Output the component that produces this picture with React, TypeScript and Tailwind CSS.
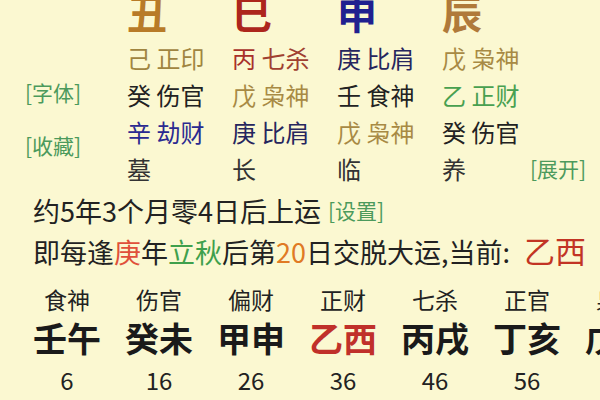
import React from "react";

const font = { fontFamily: '"Noto Sans CJK SC", "Noto Sans", sans-serif' };

type Cell = { gan: string; shen: string; gc: string; sc: string };

const tops = [
  { ch: "丑", c: "text-[#b87b28]" },
  { ch: "巳", c: "text-[#ad261c]" },
  { ch: "申", c: "text-[#20208f]" },
  { ch: "辰", c: "text-[#b07a3a]" },
];

const rows: Cell[][] = [
  [
    { gan: "己", shen: "正印", gc: "text-[#a08540]", sc: "text-[#a08540]" },
    { gan: "丙", shen: "七杀", gc: "text-[#a8302a]", sc: "text-[#a04030]" },
    { gan: "庚", shen: "比肩", gc: "text-[#26265e]", sc: "text-[#26265e]" },
    { gan: "戊", shen: "枭神", gc: "text-[#a88a44]", sc: "text-[#a88a44]" },
  ],
  [
    { gan: "癸", shen: "伤官", gc: "text-[#222]", sc: "text-[#222]" },
    { gan: "戊", shen: "枭神", gc: "text-[#a88a44]", sc: "text-[#a88a44]" },
    { gan: "壬", shen: "食神", gc: "text-[#222]", sc: "text-[#222]" },
    { gan: "乙", shen: "正财", gc: "text-[#48a050]", sc: "text-[#48a050]" },
  ],
  [
    { gan: "辛", shen: "劫财", gc: "text-[#2a2a90]", sc: "text-[#2a2a90]" },
    { gan: "庚", shen: "比肩", gc: "text-[#26265e]", sc: "text-[#26265e]" },
    { gan: "戊", shen: "枭神", gc: "text-[#a88a44]", sc: "text-[#a88a44]" },
    { gan: "癸", shen: "伤官", gc: "text-[#222]", sc: "text-[#222]" },
  ],
];

const stages = ["墓", "长", "临", "养"];

const dayun = [
  { shen: "食神", gz: "壬午", age: "6" },
  { shen: "伤官", gz: "癸未", age: "16" },
  { shen: "偏财", gz: "甲申", age: "26" },
  { shen: "正财", gz: "乙西", age: "36", now: true },
  { shen: "七杀", gz: "丙戌", age: "46" },
  { shen: "正官", gz: "丁亥", age: "56" },
  { shen: "枭神", gz: "戊子", age: "66" },
];

const colW = ["w-[105px]", "w-[105px]", "w-[105px]", "w-[158px]"];

export default function App() {
  return (
    <div style={font} className="w-[600px] h-[400px] overflow-hidden bg-[#fbf8d1] text-[#222]">
      {/* pillars */}
      <div className="flex">
        <div className="w-[127px] shrink-0 flex flex-col pl-[25px] text-[21px] leading-[24px] text-[#4c9a5c]">
          <span className="mt-[80px]">[字体]</span>
          <span className="mt-[29px]">[收藏]</span>
        </div>
        <div className="flex flex-col">
          <div className="flex h-[39px]">
            {tops.map((t, i) => (
              <div key={i} className={`${colW[i]} shrink-0 text-[40px] leading-[25px] font-bold ${t.c}`}>
                {t.ch}
              </div>
            ))}
          </div>
          {rows.map((r, ri) => (
            <div key={ri} className="flex text-[24px] leading-[37px]">
              {r.map((c, ci) => (
                <div key={ci} className={`${colW[ci]} shrink-0 whitespace-nowrap`}>
                  <span className={c.gc}>{c.gan}</span> <span className={c.sc}>{c.shen}</span>
                </div>
              ))}
            </div>
          ))}
          <div className="flex text-[24px] leading-[37px] text-[#333]">
            {stages.map((s, i) => (
              <div key={i} className={`${colW[i]} shrink-0 flex items-center`}>
                <span>{s}</span>
                {i === 3 && <span className="ml-[64px] text-[21px] text-[#4c9a5c]">[展开]</span>}
              </div>
            ))}
          </div>
        </div>
      </div>

      {/* qiyun */}
      <div className="pl-[33px] mt-[4px] text-[27px] whitespace-nowrap">
        <div className="leading-[39px] flex items-center">
          <span>约5年3个月零4日后上运</span>
          <span className="ml-[7px] text-[21px] text-[#4c9a5c]">[设置]</span>
        </div>
        <div className="leading-[40px]">
          即每逢<span className="text-[#e0503a]">庚</span>年<span className="text-[#3fa04c]">立秋</span>后第
          <span className="text-[#e07a24]">20</span>日交脱大运,当前:
          <span className="ml-[14px] text-[31px] text-[#c23424]">乙西</span>
        </div>
      </div>

      {/* dayun */}
      <div className="flex pl-[21px] mt-[12px]">
        {dayun.map((d, i) => (
          <div key={i} className="w-[92px] shrink-0 flex flex-col items-center">
            <span className="text-[23px] leading-[30px]">{d.shen}</span>
            <span
              className={`mt-[3px] text-[34px] leading-[42px] font-bold ${d.now ? "text-[#c0302a]" : "text-[#1a1a1a]"}`}
            >
              {d.gz}
            </span>
            <span className="mt-[6px] text-[24px] leading-[30px]">{d.age}</span>
          </div>
        ))}
      </div>
    </div>
  );
}
